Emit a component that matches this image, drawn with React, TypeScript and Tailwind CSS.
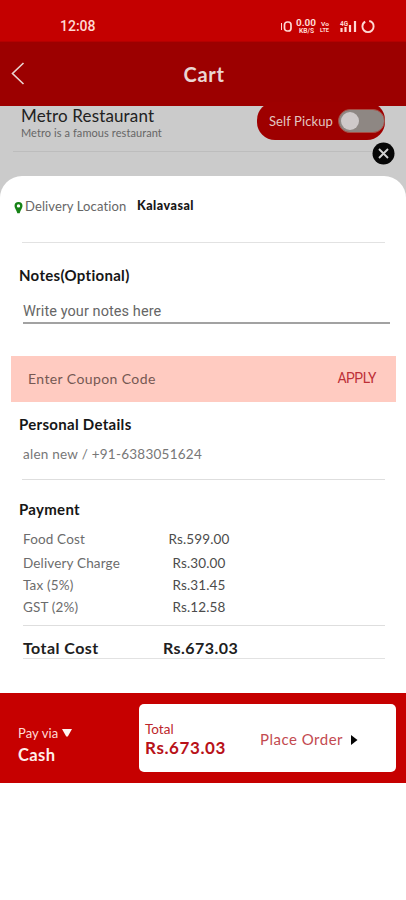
import type { ReactNode } from "react";

const charges = [
  { label: "Food Cost", amount: "Rs.599.00", row: "h-[24px]" },
  { label: "Delivery Charge", amount: "Rs.30.00", row: "h-[22px]" },
  { label: "Tax (5%)", amount: "Rs.31.45", row: "h-[22px]" },
  { label: "GST (2%)", amount: "Rs.12.58", row: "h-[23px]" },
];

function SectionTitle({ children }: { children: ReactNode }) {
  return (
    <h2 className="pl-[19px] text-[15px] leading-5 font-bold tracking-[0.3px] text-[#161616]">{children}</h2>
  );
}

function StatusBar() {
  return (
    <div className="flex h-[41px] items-start bg-[#c40000] pt-[18px] pl-[60px] text-[#ffd9d3]">
      <span className="w-[220px] font-[Roboto] text-[14px] leading-[17px] font-medium">12:08</span>
      <svg width="98" height="18" viewBox="0 0 98 18" fill="none" stroke="currentColor">
        <path d="M1.500 5v7" strokeWidth="1" />
        <rect x="4.500" y="4" width="6.500" height="9" rx="2.800" strokeWidth="1.700" />
        <g fill="currentColor" stroke="none" fontFamily="Roboto" fontWeight="700">
          <text x="16" y="8" fontSize="9" textLength="20" lengthAdjust="spacingAndGlyphs">0.00</text>
          <text x="19" y="15" fontSize="7" textLength="15" lengthAdjust="spacingAndGlyphs">KB/S</text>
          <text x="41" y="8" fontSize="6" textLength="8" lengthAdjust="spacingAndGlyphs">Vo</text>
          <text x="40" y="14" fontSize="6" textLength="9" lengthAdjust="spacingAndGlyphs">LTE</text>
          <text x="60" y="8" fontSize="7" textLength="8" lengthAdjust="spacingAndGlyphs">4G</text>
        </g>
        <path d="M61.500 10v4M65.500 9v5M70 7v7M75 3v11" strokeWidth="2.200" />
        <circle cx="88" cy="8.500" r="5.600" strokeWidth="1.900" strokeDasharray="31 4.200" strokeDashoffset="-27" />
      </svg>
    </div>
  );
}

export default function App() {
  return (
    <div className="h-[900px] w-[406px] overflow-hidden bg-white font-[Lato,sans-serif] whitespace-nowrap">
      <StatusBar />
      <header className="grid h-[65px] grid-cols-[1fr_auto_1fr] items-center border-t border-[#b40000] bg-[#9c0000] text-[#ead6d2]">
        <svg width="30" height="26" viewBox="0 0 30 26" fill="none" stroke="currentColor" strokeWidth="1.600">
          <path d="M23.500 2 12.500 12.500 23.500 23" />
        </svg>
        <h1 className="pl-[2px] text-[20px] leading-6 font-bold tracking-[0.7px]">Cart</h1>
      </header>

      <div className="bg-[#cbcbcb]">
        <section className="relative flex h-[70px] justify-between pr-[21px] pl-[21px]">
          <div>
            <p className="text-[17px] leading-5 tracking-[0.15px] text-[#222]">Metro Restaurant</p>
            <p className="-mt-px text-[11px] leading-4 tracking-[0.08px] text-[#666]">Metro is a famous restaurant</p>
          </div>
          <div className="-mt-[4px] flex h-[38px] w-[128px] items-center rounded-[18px] bg-[#9e0000] pl-3">
            <span className="flex-1 pt-px text-[13px] tracking-[0.1px] text-[#e2c6c1]">Self Pickup</span>
            <span className="flex h-[24px] w-[47px] items-center rounded-full border border-[#a94c43] bg-[#8e8783] pl-[2px]">
              <span className="h-[18px] w-[18px] rounded-full bg-[#cfc9c9]" />
            </span>
          </div>
          <hr className="absolute top-[45px] left-[13px] w-[359px] border-t border-[#bdbdbd]" />
          <svg className="absolute top-[36px] right-[11px]" width="23" height="23" viewBox="0 0 23 23">
            <circle cx="11.500" cy="11.500" r="11" fill="#060606" />
            <path d="m7 7 9 9m0-9-9 9" stroke="#d0d0d0" strokeWidth="1.900" />
          </svg>
        </section>

        <main className="h-[517px] rounded-t-[22px] bg-white">
          <div className="flex h-[66px] items-center pb-[4px] pl-[14px]">
            <svg className="mt-[2px] mr-[2px]" width="9" height="12" viewBox="0 0 9 12">
              <path fill="#168216" fillRule="evenodd" d="M4.500 0A4 4 0 0 0 .5 4c0 2.200 2 3.800 2.800 7.300h2.400C6.500 7.800 8.500 6.200 8.500 4A4 4 0 0 0 4.500 0Zm0 2.200a1.700 1.700 0 1 1 0 3.400 1.700 1.700 0 0 1 0-3.400Z" />
            </svg>
            <span className="w-[112px] text-[13px] tracking-[0.12px] text-[#666]">Delivery Location</span>
            <span className="pb-[2px] text-[12.5px] font-black tracking-[0.5px] text-[#161616]">Kalavasal</span>
          </div>
          <hr className="ml-[22px] w-[363px] border-t border-[#e2e2e2]" />
          <div className="pt-[22px]"><SectionTitle>Notes(Optional)</SectionTitle></div>
          <div className="mt-[17px] ml-[23px] h-[22px] w-[367px] border-b-2 border-[#a2a2a2] font-[Roboto] text-[14.5px] leading-5 tracking-[0.08px] text-[#666]">
            Write your notes here
          </div>
          <div className="mt-[32px] ml-[11px] flex h-[46px] w-[385px] items-center justify-between bg-[#ffcbc1] pr-5 pb-[2px] pl-[17px]">
            <span className="text-[14px] tracking-[0.4px] text-[#755853]">Enter Coupon Code</span>
            <span className="font-[Roboto] text-[14px] tracking-[-0.5px] text-[#bd3037]">APPLY</span>
          </div>
          <div className="pt-[12px]"><SectionTitle>Personal Details</SectionTitle></div>
          <p className="mt-[10px] pl-[23px] text-[13.5px] leading-5 tracking-[0.25px] text-[#777]">alen new / +91-6383051624</p>
          <hr className="mt-[15px] ml-[22px] w-[363px] border-t border-[#dedede]" />
          <div className="pt-[19px]"><SectionTitle>Payment</SectionTitle></div>
          <dl className="pt-[10px] pl-[23px] text-[13.5px] leading-5 tracking-[0.15px]">
            {charges.map((c) => (
              <div key={c.label} className={`flex ${c.row}`}>
                <dt className="w-[116px] text-[#6c6c6c]">{c.label}</dt>
                <dd className="w-[120px] text-center text-[#4c4c4c]">{c.amount}</dd>
              </div>
            ))}
          </dl>
          <hr className="mt-[5px] ml-[23px] w-[362px] border-t border-[#dedede]" />
          <div className="ml-[23px] flex h-[33px] w-[362px] border-b border-[#e2e2e2] pt-[12px] text-[16px] leading-5 font-bold tracking-[0.45px] text-[#202020]">
            <span className="w-[140px]">Total Cost</span>
            <span>Rs.673.03</span>
          </div>
        </main>
      </div>

      <footer className="flex h-[90px] bg-[#c60000] pt-[11px] pl-[18px]">
        <div className="w-[121px] pt-[19px] text-[#ffdcd6]">
          <div className="flex items-center gap-1 text-[13px] leading-5 tracking-[0.1px]">
            <span>Pay via</span>
            <svg width="10" height="8" viewBox="0 0 10 8"><path fill="#fff4f1" d="M0 0h10L5.800 7.500H4.200Z" /></svg>
          </div>
          <p className="mt-[2px] text-[16.5px] leading-5 font-bold tracking-[0.4px] text-[#ffeeea]">Cash</p>
        </div>
        <div className="flex h-[68px] w-[257px] rounded-[5px] bg-white pl-[6px]">
          <div className="w-[115px] pt-[15px] text-[#bd252b]">
            <p className="text-[13.5px] leading-5">Total</p>
            <p className="text-[17px] leading-[18px] font-bold tracking-[0.6px] text-[#b81118]">Rs.673.03</p>
          </div>
          <div className="flex items-center gap-[8px] pt-[3px] text-[15px] tracking-[0.5px] text-[#c34a50]">
            <span>Place Order</span>
            <svg width="7" height="10" viewBox="0 0 7 10"><path fill="#050505" d="M0 0 6.500 5 0 10Z" /></svg>
          </div>
        </div>
      </footer>
    </div>
  );
}
